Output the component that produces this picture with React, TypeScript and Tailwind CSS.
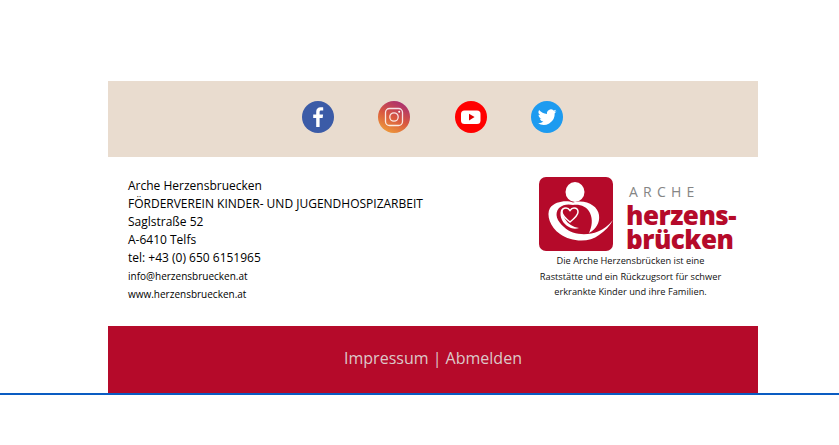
const socials = ["facebook", "instagram", "youtube", "twitter"];

function SocialIcon({ name }: { name: string }) {
  if (name === "facebook") {
    return (
      <svg width="32" height="32" viewBox="0 0 32 32">
        <circle cx="16" cy="16" r="16" fill="#3b5ba7" />
        <path d="M17.6 26v-9h3l.5-3.500h-3.500v-2.200c0-1 .3-1.700 1.800-1.700h1.800V6.400c-.4 0-1.400-.1-2.600-.1-2.600 0-4.400 1.600-4.400 4.500v2.700h-3V17h3v9z" fill="#fff" />
      </svg>
    );
  }
  if (name === "instagram") {
    return (
      <svg width="32" height="32" viewBox="0 0 32 32">
        <defs>
          <linearGradient id="ig" x1="0.2" y1="1" x2="0.7" y2="0">
            <stop offset="0" stopColor="#f0a03a" />
            <stop offset="0.5" stopColor="#d9583f" />
            <stop offset="1" stopColor="#a92f72" />
          </linearGradient>
        </defs>
        <circle cx="16" cy="16" r="16" fill="url(#ig)" />
        <rect x="7.500" y="7.500" width="17" height="17" rx="4" fill="none" stroke="#fff" strokeOpacity="0.85" strokeWidth="1.300" />
        <circle cx="16" cy="16" r="4.200" fill="none" stroke="#fff" strokeOpacity="0.85" strokeWidth="1.300" />
        <circle cx="21.200" cy="10.800" r="1" fill="#fff" />
      </svg>
    );
  }
  if (name === "youtube") {
    return (
      <svg width="32" height="32" viewBox="0 0 32 32">
        <circle cx="16" cy="16" r="16" fill="#ff0000" />
        <rect x="6" y="9.500" width="19.500" height="13.500" rx="3.500" fill="#fff" />
        <path d="M14 12.800v6.600l5.600-3.300z" fill="#e00000" />
      </svg>
    );
  }
  return (
    <svg width="32" height="32" viewBox="0 0 32 32">
      <circle cx="16" cy="16" r="16" fill="#1d9bf0" />
      <path d="M25.500 10.200c-.7.3-1.400.5-2.200.6.800-.5 1.400-1.200 1.700-2.100-.7.400-1.600.8-2.400.9a3.900 3.900 0 0 0-6.600 3.500c-3.200-.2-6-1.700-7.900-4a3.900 3.900 0 0 0 1.200 5.200c-.6 0-1.200-.2-1.800-.5 0 1.900 1.300 3.500 3.100 3.900-.6.100-1.200.2-1.800.1.500 1.500 1.900 2.600 3.600 2.700a7.800 7.800 0 0 1-5.700 1.600 11 11 0 0 0 17-9.800c.8-.5 1.400-1.200 1.800-2z" fill="#fff" />
    </svg>
  );
}

function LogoMark() {
  return (
    <svg width="74" height="74" viewBox="0 0 74 74" className="shrink-0">
      <rect width="74" height="74" rx="7" fill="#b50a2a" />
      <ellipse cx="36" cy="15" rx="9.500" ry="10" fill="#fff" />
      <path d="M34 25.500C28 23 16 24 11 31C7 38 11 50 21 57C32 65 50 66 60 58C66 54 71 49 74 43C69 49 65 52 59 54.500C48 59 33 58 25 50C18 44 15 37 20 31C24 27 30 27 34 28C40 27 48 29 51 36C54 43 53 49 50 56C57 52 61 46 60 38C59 30 50 24 40 24.500C38 24.500 36 25 34 25.500Z" fill="#fff" />
      <path d="M22 33C20 40 24 47 30 50C33 52 37 52 40 51C34 50 29 47 26 42C24 38 23 36 24 31Z" fill="#fff" />
      <path d="M31 45C26 41 23 38 23 35C23 32 25 31 27 31C29 31 30 32 31 33.500C32 32 33 31 35 31C37 31 39 32 39 35C39 38 36 41 31 45Z" fill="#b50a2a" stroke="#fff" strokeWidth="1.500" />
    </svg>
  );
}

export default function App() {
  return (
    <div className="relative h-[445px] w-[839px] overflow-hidden bg-white font-['Open_Sans',sans-serif]">
      <div className="ml-[108px] w-[650px] pt-[81px]">
        <div className="flex h-[76px] items-center justify-center gap-[44.500px] bg-[#e9dccf] pb-[4px] pr-[1px]">
          {socials.map((name) => (
            <SocialIcon key={name} name={name} />
          ))}
        </div>

        <div className="flex h-[169px] justify-between pl-5 pr-[21px] pt-[20px] text-black">
          <div className="text-[12px] leading-[18px]">
            <p>Arche Herzensbruecken</p>
            <p>FÖRDERVEREIN KINDER- UND JUGENDHOSPIZARBEIT</p>
            <p>Saglstraße 52</p>
            <p>A-6410 Telfs</p>
            <p>tel: +43 (0) 650 6151965</p>
            <p className="text-[10px]">info@herzensbruecken.at</p>
            <p className="text-[10px]">www.herzensbruecken.at</p>
          </div>

          <div className="w-[198px]">
            <div className="flex gap-[13px]">
              <LogoMark />
              <div className="text-[#b50a2a]">
                <p className="mt-[5px] ml-[3px] text-[14px] leading-[20px] tracking-[5.200px] text-[#858585]">ARCHE</p>
                <p className="mt-[1px] text-[26px] font-extrabold leading-[24px] tracking-[-0.500px]">herzens-</p>
                <p className="text-[26px] font-extrabold leading-[24px] tracking-[-0.500px]">brücken</p>
              </div>
            </div>
            <p className="mt-[2px] w-[183px] whitespace-nowrap text-center text-[9.250px] leading-[15.500px] text-[#111111]">
              Die Arche Herzensbrücken ist eine
              <br />
              Raststätte und ein Rückzugsort für schwer
              <br />
              erkrankte Kinder und ihre Familien.
            </p>
          </div>
        </div>

        <div className="flex h-[68px] items-center justify-center bg-[#b50a2a] pb-[5px] text-[16px] text-[#dcc8c8]">
          Impressum | Abmelden
        </div>
      </div>
      <div className="absolute left-0 top-[393px] h-[2px] w-full bg-[#0a5cc2]" />
    </div>
  );
}
